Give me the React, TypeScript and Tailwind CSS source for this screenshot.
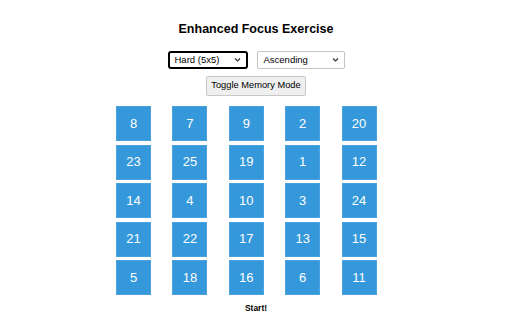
const NUMBERS = [8, 7, 9, 2, 20, 23, 25, 19, 1, 12, 14, 4, 10, 3, 24, 21, 22, 17, 13, 15, 5, 18, 16, 6, 11];

export default function App() {
  return (
    <div className="w-[512px] h-[320px] bg-white flex flex-col items-center font-['Liberation_Sans',Arial,sans-serif] text-black">
      <h1 className="mt-[20px] text-[12.5px] font-bold leading-[18px]">Enhanced Focus Exercise</h1>

      {/* Controls */}
      <div className="mt-[13px] flex gap-[9px]">
        <div className="relative w-[80px] h-[18px] border-2 border-black rounded-[3px] flex items-center pl-[5px] text-[9.5px]">
          Hard (5x5)
          <Chevron />
        </div>
        <div className="relative w-[88px] h-[18px] border border-[#c4c4c4] rounded-[2px] flex items-center pl-[6px] text-[9.5px]">
          Ascending
          <Chevron />
        </div>
      </div>
      <button className="mt-[7px] h-[20px] px-[4px] border border-[#c8c8c8] rounded-[2px] bg-[#efefef] text-[9.3px] leading-none">
        Toggle Memory Mode
      </button>

      {/* Grid */}
      <div className="mt-[10px] ml-[2px] w-[282px] grid grid-cols-5 gap-y-[3.5px]">
        {NUMBERS.map((n) => (
          <div
            key={n}
            className="w-[35px] h-[35px] bg-[#3498db] border border-[#4aa3df] flex items-center justify-center text-white text-[13px]"
          >
            {n}
          </div>
        ))}
      </div>

      <p className="mt-[7px] text-[8.5px] font-bold">Start!</p>
    </div>
  );
}

function Chevron() {
  return (
    <svg className="absolute right-[5px] top-1/2 -translate-y-1/2" width="7" height="5" viewBox="0 0 7 5">
      <path d="M1 1l2.5 2.5L6 1" fill="none" stroke="#333" strokeWidth="1.2" />
    </svg>
  );
}
